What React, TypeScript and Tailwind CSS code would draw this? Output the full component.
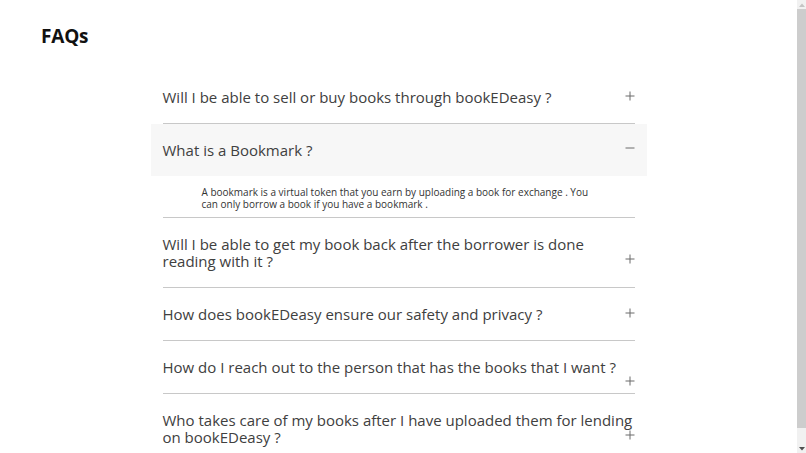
import { useState } from "react";

type Faq = {
  q: string;
  a?: string;
  icon: string;
};

const faqs: Faq[] = [
  {
    q: "Will I be able to sell or buy books through bookEDeasy ?",
    icon: "self-center -translate-y-[2px]",
  },
  {
    q: "What is a Bookmark ?",
    a: "A bookmark is a virtual token that you earn by uploading a book for exchange . You can only borrow a book if you have a bookmark .",
    icon: "self-center -translate-y-[3px]",
  },
  {
    q: "Will I be able to get my book back after the borrower is done reading with it ?",
    icon: "self-end mb-[6px]",
  },
  {
    q: "How does bookEDeasy ensure our safety and privacy ?",
    icon: "self-center -translate-y-[2px]",
  },
  {
    q: "How do I reach out to the person that has the books that I want ?",
    icon: "self-end -mb-[10px]",
  },
  {
    q: "Who takes care of my books after I have uploaded them for lending on bookEDeasy ?",
    icon: "self-end mb-[6px]",
  },
];

function Plus() {
  return (
    <svg width="10" height="10" viewBox="0 0 10 10" fill="none">
      <path d="M5 0.5v9M0.5 5h9" stroke="#6b6b6b" strokeWidth="1" />
    </svg>
  );
}

function Minus() {
  return (
    <svg width="10" height="10" viewBox="0 0 10 10" fill="none">
      <path d="M0.5 5h9" stroke="#6b6b6b" strokeWidth="1" />
    </svg>
  );
}

// stand-in for the page scrollbar seen in the screenshot
function ScrollRail() {
  return (
    <div className="flex w-[9px] shrink-0 flex-col bg-[#f1f1f1]">
      <div className="flex h-[9px] items-center justify-center">
        <svg width="6" height="4" viewBox="0 0 6 4">
          <path d="M0 4L3 0.5L6 4Z" fill="#c4c4c4" />
        </svg>
      </div>
      <div className="flex-1 pb-[16px]">
        <div className="h-full bg-[#cdcdcd]" />
      </div>
      <div className="flex h-[9px] items-center justify-center">
        <svg width="6" height="4" viewBox="0 0 6 4">
          <path d="M0 0L3 3.5L6 0Z" fill="#505050" />
        </svg>
      </div>
    </div>
  );
}

export default function App() {
  const [open, setOpen] = useState(1);

  return (
    <div className="flex h-screen overflow-hidden bg-white font-['Open_Sans',sans-serif] text-[#404040]">
      <main className="min-w-0 flex-1">
        <h1 className="px-[41px] pt-[24px] text-[19px] font-bold leading-[24px] tracking-[-0.2px] text-[#111]">
          FAQs
        </h1>

        <div className="mx-auto mt-[23px] w-[496px] pb-[6px]">
          {faqs.map((f, i) => {
            const isOpen = open === i;
            return (
              <div key={f.q}>
                <button
                  type="button"
                  onClick={() => setOpen(isOpen ? -1 : i)}
                  className={`flex w-full justify-between px-[12px] pt-[18px] pb-[17px] text-left ${
                    isOpen ? "bg-[#f7f7f7]" : "bg-white"
                  }`}
                >
                  <span className="min-w-0 flex-1 text-[15px] leading-[17px] text-[#404040]">
                    {f.q}
                  </span>
                  <span className={`-ml-[12px] w-[10px] shrink-0 ${f.icon}`}>
                    {isOpen ? <Minus /> : <Plus />}
                  </span>
                </button>
                {isOpen && f.a ? (
                  <p className="pl-[51px] pr-[56px] pt-[10px] pb-[7px] text-[10px] leading-[12px] text-[#333]">
                    {f.a}
                  </p>
                ) : null}
                <div className="mx-[12px] h-px bg-[#c8c8c8]" />
              </div>
            );
          })}
        </div>
      </main>
      <ScrollRail />
    </div>
  );
}
